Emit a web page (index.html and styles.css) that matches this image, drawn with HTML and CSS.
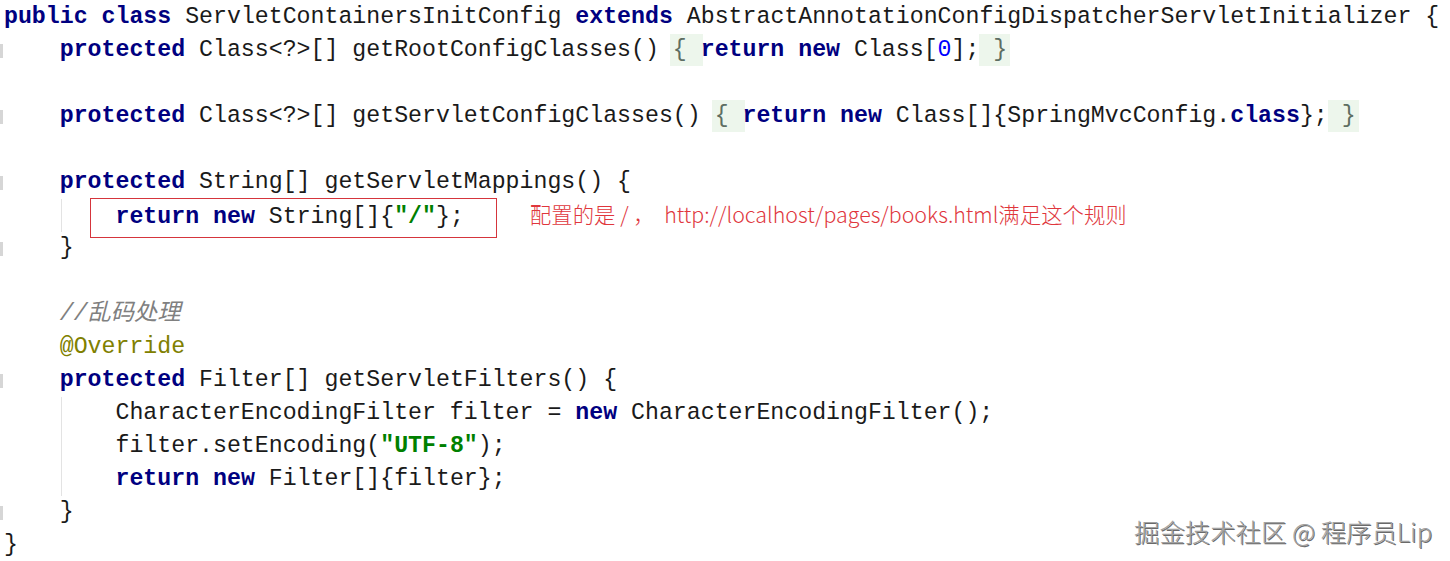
FILE: index.html
```html
<!DOCTYPE html>
<html lang="zh">
<head>
<meta charset="utf-8">
<title>ServletContainersInitConfig</title>
<link rel="stylesheet" href="styles.css">
</head>
<body>
<div class="page">
  <div class="code">
    <div class="ln"><i class="g"></i><span><b class="kw">public</b> <b class="kw">class</b> ServletContainersInitConfig <b class="kw">extends</b> AbstractAnnotationConfigDispatcherServletInitializer {</span></div>
    <div class="ln"><i class="g mark"></i><span>    <b class="kw">protected</b> Class&lt;?&gt;[] getRootConfigClasses() <span class="fold fold-open">{ </span><b class="kw">return</b> <b class="kw">new</b> Class[<span class="num">0</span>];<span class="fold fold-close"> }</span></span></div>
    <div class="ln"><i class="g"></i><span> </span></div>
    <div class="ln"><i class="g mark"></i><span>    <b class="kw">protected</b> Class&lt;?&gt;[] getServletConfigClasses() <span class="fold fold-open">{ </span><b class="kw">return</b> <b class="kw">new</b> Class[]{SpringMvcConfig.<b class="kw">class</b>};<span class="fold fold-close"> }</span></span></div>
    <div class="ln"><i class="g"></i><span> </span></div>
    <div class="ln"><i class="g mark"></i><span>    <b class="kw">protected</b> String[] getServletMappings() {</span></div>
    <div class="ln guide"><i class="g"></i><span>        <span class="boxed"><b class="kw">return</b> <b class="kw">new</b> String[]{<b class="str">"/"</b>};</span><span class="note">配置的是 / ，  http://localhost/pages/books.html满足这个规则</span></span></div>
    <div class="ln"><i class="g mark"></i><span>    }</span></div>
    <div class="ln"><i class="g"></i><span> </span></div>
    <div class="ln"><i class="g"></i><span>    <span class="cmt">//乱码处理</span></span></div>
    <div class="ln"><i class="g"></i><span>    <span class="ann">@Override</span></span></div>
    <div class="ln"><i class="g mark"></i><span>    <b class="kw">protected</b> Filter[] getServletFilters() {</span></div>
    <div class="ln guide"><i class="g"></i><span>        CharacterEncodingFilter filter = <b class="kw">new</b> CharacterEncodingFilter();</span></div>
    <div class="ln guide"><i class="g"></i><span>        filter.setEncoding(<b class="str">"UTF-8"</b>);</span></div>
    <div class="ln guide"><i class="g"></i><span>        <b class="kw">return</b> <b class="kw">new</b> Filter[]{filter};</span></div>
    <div class="ln"><i class="g mark"></i><span>    }</span></div>
    <div class="ln"><i class="g"></i><span>}</span></div>
  </div>
  <div class="watermark">掘金技术社区 @ 程序员Lip</div>
</div>
</body>
</html>
```
FILE: styles.css
```css
html, body {
  margin: 0;
  padding: 0;
  background: #ffffff;
}

.page {
  position: relative;
  width: 1450px;
  height: 561px;
  overflow: hidden;
  background: #ffffff;
}

.code {
  display: flex;
  flex-direction: column;
  padding-top: 1px;
  font-family: "Liberation Mono", "Noto Sans CJK SC", monospace;
  font-size: 23.23px;
  line-height: 33px;
  color: #1a1a1a;
}

.ln {
  display: flex;
  align-items: center;
  height: 33px;
  white-space: pre;
}

.ln.guide {
  background: linear-gradient(to right, transparent 61px, #e3e3e3 61px, #e3e3e3 62px, transparent 62px);
}

.g {
  display: block;
  flex: 0 0 4px;
  width: 4px;
  height: 14px;
}

.g.mark {
  background: linear-gradient(to right, #d6d6d6 0, #d6d6d6 3px, transparent 3px);
}

.kw {
  color: #000080;
  font-weight: bold;
}

.num {
  color: #0000ff;
}

.str {
  color: #008000;
  font-weight: bold;
}

.cmt {
  color: #808080;
  font-style: italic;
}

.ann {
  color: #808000;
}

.fold {
  display: inline-block;
  line-height: 32px;
  background: #edf6ec;
  color: #5e6e62;
}

.fold-open {
  box-shadow: -3px 0 0 #edf6ec, 2px 0 0 #edf6ec;
}

.fold-close {
  box-shadow: 3px 0 0 #edf6ec;
}

.boxed {
  position: relative;
}

.boxed::after {
  content: "";
  position: absolute;
  left: -25px;
  right: -33px;
  top: -6px;
  bottom: -8px;
  border: 1px solid #d5353c;
}

.note {
  margin-left: 66px;
  font-family: "Noto Sans CJK SC", "Noto Sans", sans-serif;
  font-size: 21.4px;
  font-weight: 300;
  color: #e0363c;
}

.watermark {
  position: absolute;
  right: 18px;
  bottom: 14px;
  font-family: "Noto Sans CJK SC", "Noto Sans", sans-serif;
  font-size: 25.4px;
  line-height: 32px;
  font-weight: 300;
  color: #a2a2a2;
  text-shadow: 1px 1px 0 #6a6a6a, -1px -1px 0 #ffffff;
  white-space: nowrap;
}
```
